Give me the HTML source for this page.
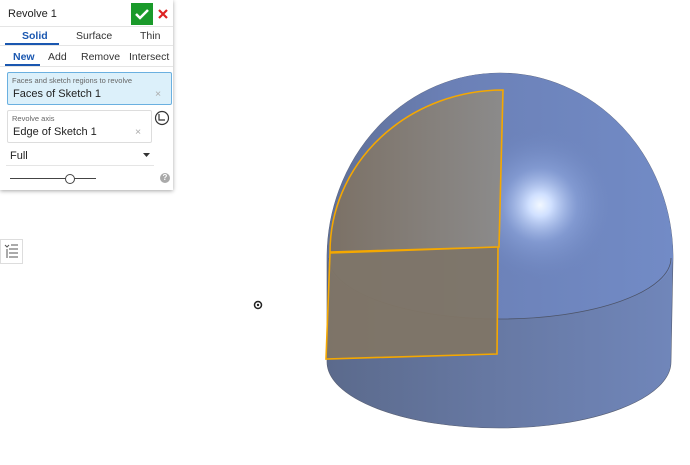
<!DOCTYPE html>
<html><head><meta charset="utf-8"><style>
body{margin:0;width:690px;height:465px;background:#fff;font-family:"Liberation Sans",sans-serif;position:relative;overflow:hidden}
.p{position:absolute;left:0;top:0;width:173px;height:190px;background:#fff;box-shadow:0 1px 4px rgba(0,0,0,.35);font-size:10.5px;color:#333}
.a{position:absolute}
</style></head><body>
<svg class="a" style="left:0;top:0" width="690" height="465">
<defs>
<linearGradient id="g" x1="0" x2="1"><stop offset="0" stop-color="#5b6a8c"/><stop offset=".5" stop-color="#6779a4"/><stop offset="1" stop-color="#7086ba"/></linearGradient>
<linearGradient id="d" x1="0" x2="1"><stop offset="0" stop-color="#5f6f96"/><stop offset=".35" stop-color="#6b80b6"/><stop offset="1" stop-color="#728bc6"/></linearGradient>
<radialGradient id="h" cx="540" cy="205" r="75" gradientUnits="userSpaceOnUse"><stop offset="0" stop-color="#f2f8ff"/><stop offset=".15" stop-color="#d0e0ff"/><stop offset=".5" stop-color="#8ea6dd" stop-opacity=".6"/><stop offset="1" stop-color="#7088c2" stop-opacity="0"/></radialGradient>
<linearGradient id="o" x1="0" x2="1"><stop offset="0" stop-color="#7d7163"/><stop offset="1" stop-color="#8d8b88"/></linearGradient>
</defs>
<path d="M327 258 A173 185 0 0 1 673 258 L671 362 A172 66 0 0 1 327 362 Z" fill="url(#g)" stroke="#555c70" stroke-width=".6"/>
<path d="M327 258 A173 185 0 0 1 673 258 A173 61 0 0 1 327 258 Z" fill="url(#d)"/>
<path d="M327 258 A173 185 0 0 1 673 258 A173 61 0 0 1 327 258 Z" fill="url(#h)"/>
<path d="M329 258 A171 61 0 0 0 671 258" fill="none" stroke="#4d5468" stroke-width=".8"/>
<path d="M503 90 L499 247 L330 252 A173 162 0 0 1 503 90 Z" fill="url(#o)" fill-opacity=".95"/>
<path d="M330 253 L498 247 L497 354 L326 359 Z" fill="#7f7566" fill-opacity=".95"/>
<path d="M503 90 L499 247 L330 252 A173 162 0 0 1 503 90 Z M330 253 L498 247 L497 354 L326 359 Z" fill="none" stroke="#f5a800" stroke-width="1.6"/>
<circle cx="258" cy="305" r="3.5" fill="none" stroke="#222" stroke-width="1.5"/><circle cx="258" cy="305" r="1.2" fill="#222"/>
<rect x="0.5" y="239.5" width="22" height="24" fill="#fff" stroke="#ddd"/>
<path d="M5 245l2 2 2-2M11 245h7M9 249h9M9 253h9M9 257h9M7 249v9" stroke="#555" stroke-width="1" fill="none"/>
</svg>
<div class="p">
 <div class="a" style="left:8px;top:8px;font-size:11px;color:#222">Revolve 1</div>
 <div class="a" style="left:131px;top:3px;width:22px;height:22px;background:#1a9a2a"></div>
 <svg class="a" style="left:131px;top:3px" width="22" height="22"><path d="M5 11l4 4 8-8" stroke="#fff" stroke-width="2.5" fill="none"/></svg>
 <svg class="a" style="left:156px;top:7px" width="14" height="14"><path d="M3 3l8 8M11 3l-8 8" stroke="#d22" stroke-width="2.2"/></svg>
 <div class="a" style="left:0;top:26px;width:173px;height:1px;background:#e5e5e5"></div>
 <div class="a" style="left:22px;top:30px;color:#1a57b0;font-weight:bold">Solid</div>
 <div class="a" style="left:76px;top:30px">Surface</div>
 <div class="a" style="left:140px;top:30px">Thin</div>
 <div class="a" style="left:5px;top:43px;width:54px;height:2px;background:#1a57b0"></div>
 <div class="a" style="left:0;top:45px;width:173px;height:1px;background:#e5e5e5"></div>
 <div class="a" style="left:13px;top:51px;color:#1a57b0;font-weight:bold">New</div>
 <div class="a" style="left:48px;top:51px">Add</div>
 <div class="a" style="left:81px;top:51px">Remove</div>
 <div class="a" style="left:129px;top:51px">Intersect</div>
 <div class="a" style="left:5px;top:64px;width:35px;height:2px;background:#1a57b0"></div>
 <div class="a" style="left:0;top:66px;width:173px;height:1px;background:#e5e5e5"></div>
 <div class="a" style="left:7px;top:72px;width:163px;height:31px;background:#dcf0fa;border:1px solid #6ab0e0;border-radius:2px"></div>
 <div class="a" style="left:12px;top:76px;font-size:7.5px;color:#666">Faces and sketch regions to revolve</div>
 <div class="a" style="left:13px;top:88px;font-size:11px;color:#222">Faces of Sketch 1</div>
 <div class="a" style="left:155px;top:88px;color:#aaa">×</div>
 <div class="a" style="left:7px;top:110px;width:143px;height:31px;border:1px solid #ddd;border-radius:2px"></div>
 <div class="a" style="left:12px;top:114px;font-size:7.5px;color:#666">Revolve axis</div>
 <div class="a" style="left:13px;top:126px;font-size:11px;color:#222">Edge of Sketch 1</div>
 <div class="a" style="left:135px;top:126px;color:#aaa">×</div>
 <svg class="a" style="left:154px;top:110px" width="16" height="16"><circle cx="8" cy="8" r="6.5" fill="none" stroke="#333" stroke-width="1.2"/><path d="M5 4v6h6" stroke="#333" stroke-width="1.2" fill="none"/></svg>
 <div class="a" style="left:10px;top:150px;font-size:11px;color:#222">Full</div>
 <svg class="a" style="left:143px;top:152px" width="8" height="6"><path d="M0 1h7l-3.5 4z" fill="#333"/></svg>
 <div class="a" style="left:6px;top:165px;width:148px;height:1px;background:#e5e5e5"></div>
 <div class="a" style="left:10px;top:178px;width:86px;height:1px;background:#444"></div>
 <div class="a" style="left:65px;top:174px;width:8px;height:8px;border:1px solid #444;border-radius:50%;background:#fff"></div>
 <div class="a" style="left:160px;top:173px;width:10px;height:10px;border-radius:50%;background:#aaa;color:#fff;font-size:8px;text-align:center;line-height:10px;font-weight:bold">?</div>
</div>
</body></html>
